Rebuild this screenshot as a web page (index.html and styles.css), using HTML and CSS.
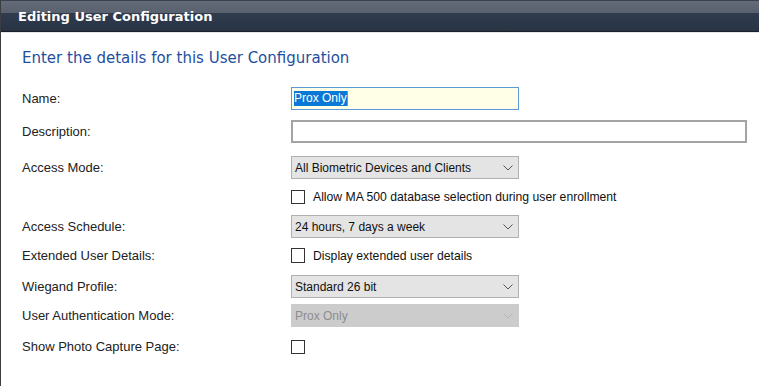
FILE: index.html
```html
<!DOCTYPE html>
<html>
<head>
<meta charset="utf-8">
<link rel="stylesheet" href="styles.css">
</head>
<body>
<div class="panel">
  <div class="header"><span class="title">Editing User Configuration</span></div>
  <div class="content">
    <h2 class="subhead">Enter the details for this User Configuration</h2>
    <div class="row r-name">
      <span class="label">Name:</span>
      <div class="input focus"><span class="sel">Prox Only</span><span class="caret"></span></div>
    </div>
    <div class="row r-desc">
      <span class="label">Description:</span>
      <div class="input wide"></div>
    </div>
    <div class="row r-mode">
      <span class="label">Access Mode:</span>
      <div class="select"><span>All Biometric Devices and Clients</span><svg class="chev" width="10" height="6" viewBox="0 0 10 6"><path d="M0.5 0.5 L5 5 L9.5 0.5" fill="none" stroke="#555" stroke-width="1"/></svg></div>
    </div>
    <div class="row r-allow">
      <span class="label"></span>
      <div class="check-line"><span class="box"></span><span class="ctext">Allow MA 500 database selection during user enrollment</span></div>
    </div>
    <div class="row r-sched">
      <span class="label">Access Schedule:</span>
      <div class="select"><span>24 hours, 7 days a week</span><svg class="chev" width="10" height="6" viewBox="0 0 10 6"><path d="M0.5 0.5 L5 5 L9.5 0.5" fill="none" stroke="#555" stroke-width="1"/></svg></div>
    </div>
    <div class="row r-ext">
      <span class="label">Extended User Details:</span>
      <div class="check-line"><span class="box"></span><span class="ctext">Display extended user details</span></div>
    </div>
    <div class="row r-wieg">
      <span class="label">Wiegand Profile:</span>
      <div class="select"><span>Standard 26 bit</span><svg class="chev" width="10" height="6" viewBox="0 0 10 6"><path d="M0.5 0.5 L5 5 L9.5 0.5" fill="none" stroke="#555" stroke-width="1"/></svg></div>
    </div>
    <div class="row r-auth">
      <span class="label">User Authentication Mode:</span>
      <div class="select disabled"><span>Prox Only</span><svg class="chev" width="10" height="6" viewBox="0 0 10 6"><path d="M0.5 0.5 L5 5 L9.5 0.5" fill="none" stroke="#b5b5b5" stroke-width="1"/></svg></div>
    </div>
    <div class="row r-photo">
      <span class="label">Show Photo Capture Page:</span>
      <div class="check-line"><span class="box"></span></div>
    </div>
  </div>
</div>
</body>
</html>
```
FILE: styles.css
```css
html, body {
  margin: 0;
  padding: 0;
  background: #ffffff;
}
.panel {
  width: 759px;
  height: 386px;
  border-left: 1px solid #3a3d42;
  box-sizing: border-box;
  font-family: "Liberation Sans", Arial, sans-serif;
}
.header {
  height: 32px;
  box-sizing: border-box;
  border-top: 1px solid #3b4049;
  border-bottom: 1px solid #1a1f27;
  background: linear-gradient(to bottom, #626b77 0px, #58616d 12px, #303c4e 12px, #283344 30px);
  display: flex;
  align-items: center;
  padding-left: 17px;
  box-shadow: 0 1px 0 #e2e5ea;
}
.title {
  color: #ffffff;
  font-family: "DejaVu Sans", Verdana, sans-serif;
  font-weight: bold;
  font-size: 13px;
  letter-spacing: 0;
}
.content {
  padding-left: 21px;
}
.subhead {
  margin: 17px 0 0 0;
  font-family: "DejaVu Sans", Verdana, sans-serif;
  font-weight: normal;
  font-size: 15px;
  color: #1f4f9e;
  height: 18px;
  line-height: 18px;
}
.row {
  display: grid;
  grid-template-columns: 269px auto;
  align-items: center;
}
.label {
  font-size: 13px;
  color: #222;
}
.r-name { margin-top: 20px; }
.r-desc { margin-top: 10px; }
.r-mode { margin-top: 13px; }
.r-allow { margin-top: 11px; }
.r-sched { margin-top: 11px; }
.r-ext { margin-top: 10px; }
.r-wieg { margin-top: 12px; }
.r-auth { margin-top: 6px; }
.r-photo { margin-top: 12px; }

.input {
  box-sizing: border-box;
  width: 228px;
  height: 23px;
  border: 2px solid #a3a3a3;
  background: #fff;
  display: flex;
  align-items: center;
  padding-left: 2px;
  font-size: 12px;
}
.input.focus {
  border: 1px solid #5a9ad6;
  background: #fffee6;
  padding-left: 2px;
}
.input.wide {
  width: 456px;
}
.sel {
  background: #0a78d7;
  color: #fff;
  line-height: 15px;
}
.caret {
  width: 1px;
  height: 15px;
  background: #e07a1d;
}
.select {
  box-sizing: border-box;
  width: 228px;
  height: 23px;
  border: 1px solid #b0b0b0;
  background: #e4e4e4;
  display: flex;
  align-items: center;
  justify-content: space-between;
  padding: 0 5px 0 3px;
  font-size: 12px;
  color: #111;
}
.select.disabled {
  background: #cccccc;
  border-color: #cccccc;
  color: #8d8d8d;
}
.chev {
  display: block;
}
.check-line {
  display: flex;
  align-items: center;
  height: 14px;
}
.box {
  width: 14px;
  height: 14px;
  box-sizing: border-box;
  border: 1px solid #333;
  background: #fff;
}
.ctext {
  margin-left: 8px;
  font-size: 12.2px;
  color: #111;
}
.r-ext .check-line { height: 15px; }
.r-ext .box { height: 15px; }
```
